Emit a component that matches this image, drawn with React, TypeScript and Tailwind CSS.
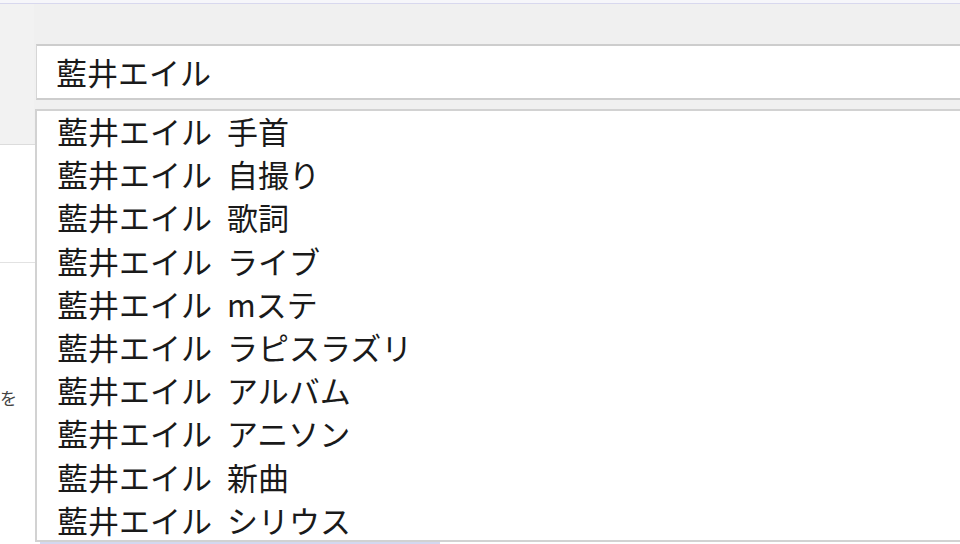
const suggestions = [
  '藍井エイル 手首',
  '藍井エイル 自撮り',
  '藍井エイル 歌詞',
  '藍井エイル ライブ',
  '藍井エイル mステ',
  '藍井エイル ラピスラズリ',
  '藍井エイル アルバム',
  '藍井エイル アニソン',
  '藍井エイル 新曲',
  '藍井エイル シリウス',
];

const font = { fontFamily: '"Noto Sans CJK JP", "Noto Sans", sans-serif' };

export default function App() {
  return (
    <div
      className="relative w-[960px] h-[544px] overflow-hidden bg-white text-[#1a1a1a]"
      style={font}
    >
      {/* page behind the suggest box */}
      <div className="h-[3px] bg-[#f6f6fa]" />
      <div className="h-[1px] bg-[#d8d8ee]" />
      <div className="flex h-[141px] border-b border-[#dcdcdc] bg-[#f0f0f0]">
        <div className="w-[34px] shrink-0 bg-[#f2f2f2]" />
        <div className="flex-1 pt-[40px] pl-[2px]">
          <div className="h-[56px] border-t-2 border-b-2 border-[#cdcdcd] border-l border-l-[#d6d6d6] bg-white pl-[19px] text-[31px] leading-[52px]">
            藍井エイル
          </div>
        </div>
      </div>
      <div className="flex h-[118px] border-b border-[#e2e2e2]" />
      <div className="pt-[125px] text-[17px] leading-[20px] text-[#444]">
        <span>を</span>
      </div>

      {/* suggestion dropdown */}
      <div className="absolute left-[35px] top-[109px] right-[-4px] h-[433px] border-t-2 border-b-2 border-l-2 border-[#d2d2d2] bg-white">
        <ul className="mt-[-2px] pl-[20px] text-[31px] leading-[43.2px] [word-spacing:8px]">
          {suggestions.map((s) => (
            <li key={s} className="whitespace-pre">
              {s}
            </li>
          ))}
        </ul>
      </div>
      <div className="absolute left-[40px] top-[542px] w-[400px] h-[2px] bg-[#d4d8f0]" />
    </div>
  );
}
